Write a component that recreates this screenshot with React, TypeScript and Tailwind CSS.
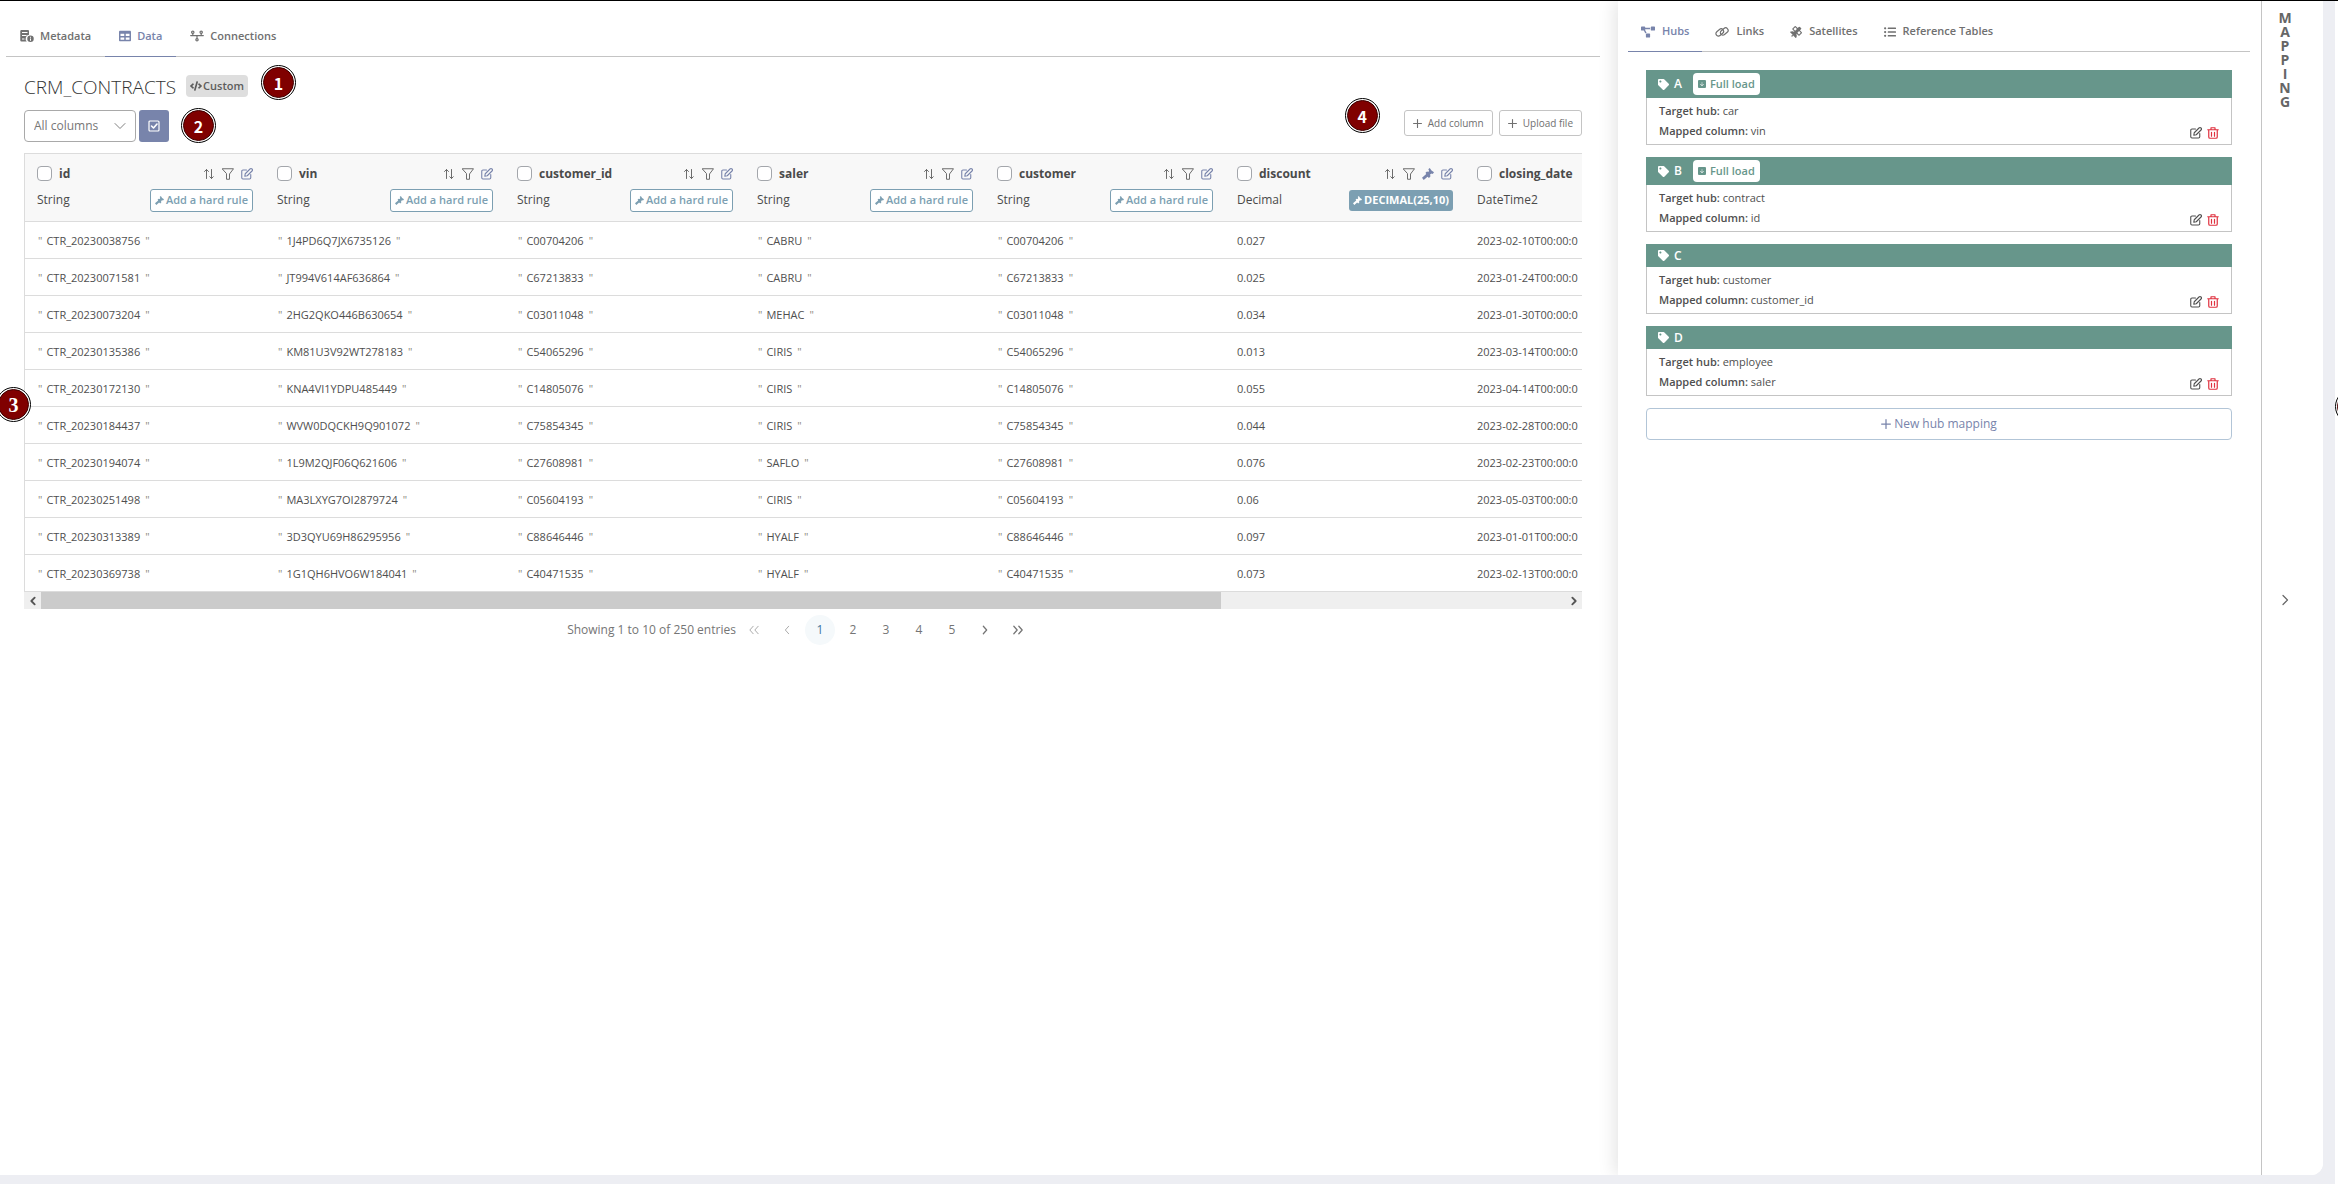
import React from "react";
import { FaTable, FaProjectDiagram, FaSatellite, FaListUl, FaTag, FaCode } from "react-icons/fa";
import { BsArrowDownSquareFill } from "react-icons/bs";

type IconProps = { className?: string };

const stroke = {
  viewBox: "0 0 24 24",
  fill: "none",
  stroke: "currentColor",
  strokeWidth: 2,
  strokeLinecap: "round" as const,
  strokeLinejoin: "round" as const,
  "aria-hidden": true,
};

const SortIcon = ({ className }: IconProps) => (
  <svg {...stroke} className={className}>
    <path d="M7 21V3M3 7l4-4 4 4M17 3v18M13.500 17.500l3.500 3.500 3.500-3.500" />
  </svg>
);

const FilterIcon = ({ className }: IconProps) => (
  <svg {...stroke} className={className}>
    <path d="M1 1.500h22L15 12v10.500H9V12z" />
  </svg>
);

const EditIcon = ({ className }: IconProps) => (
  <svg {...stroke} strokeWidth={2.2} className={className}>
    <path d="M11 4H4a2.500 2.500 0 0 0-2.500 2.500v13A2.500 2.500 0 0 0 4 22h13a2.500 2.500 0 0 0 2.500-2.500V13" />
    <path d="M18 2a2.700 2.700 0 0 1 4 4l-9.500 9.500-5 1 1-5z" />
  </svg>
);

const TrashIcon = ({ className }: IconProps) => (
  <svg {...stroke} strokeWidth={2.4} className={className}>
    <path d="M1.500 5.500h21M8 5.500V1.500h8v4M3.500 6v14A2.500 2.500 0 0 0 6 22.500h12a2.500 2.500 0 0 0 2.500-2.500V6M9 10.500v8M15 10.500v8" />
  </svg>
);

const HammerIcon = ({ className }: IconProps) => (
  <svg viewBox="0 0 24 24" fill="currentColor" aria-hidden className={className}>
    <path d="M0 19.500 8.500 12 7 9.500 10 7l3 1 1-3.500-1.500-2L15.500 0 19 5l5 3.500-2.500 3.500-2-1-3.500 2 1 3.500-3 3.500-3-2.500L3.500 24z" />
  </svg>
);

const ChevronIcon = ({ className, d = "m8 3 9 9-9 9", weight = 2.4 }: IconProps & { d?: string; weight?: number }) => (
  <svg {...stroke} className={className} strokeWidth={weight}>
    <path d={d} />
  </svg>
);

const PlusIcon = ({ className }: IconProps) => (
  <svg {...stroke} className={className} strokeWidth={3}>
    <path d="M12 1.500v21M1.500 12h21" />
  </svg>
);

const MetadataIcon = ({ className }: IconProps) => (
  <svg viewBox="0 0 28 24" fill="currentColor" aria-hidden className={className}>
    <path
      fillRule="evenodd"
      d="M3 0h13a2 2 0 0 1 2 2v7.500A8 8 0 0 0 13.500 23H3a2.500 2.500 0 0 1-2.500-2.500v-18A2.500 2.500 0 0 1 3 0zm1 4v2h11V4zm0 6v2h9v-2zm0 7v2h5v-2z"
    />
    <path fillRule="evenodd" d="M21 11a6.500 6.500 0 1 1 0 13 6.500 6.500 0 0 1 0-13zm-1 2.500v2h2v-2zm0 3.500v4.500h2V17z" />
  </svg>
);

const ConnectionsIcon = ({ className }: IconProps) => (
  <svg {...stroke} viewBox="0 0 30 24" className={className} strokeWidth={2.6}>
    <circle cx="6" cy="4" r="2.500" />
    <circle cx="24" cy="4" r="2.500" />
    <circle cx="15" cy="20" r="2.500" />
    <path d="M6 6.500V11M24 6.500V11M15 11v6.500M1.500 11h27" />
  </svg>
);

const LinkIcon = ({ className }: IconProps) => (
  <svg {...stroke} viewBox="0 0 28 24" className={className} strokeWidth={2.4}>
    <rect x="1" y="8" width="17" height="10" rx="5" transform="rotate(-40 9.500 13)" />
    <rect x="10" y="6" width="17" height="10" rx="5" transform="rotate(-40 18.500 11)" />
  </svg>
);

const CheckSquareIcon = ({ className }: IconProps) => (
  <svg {...stroke} className={className} strokeWidth={2.4}>
    <rect x="2" y="2" width="20" height="20" rx="2" />
    <path strokeWidth={3.2} d="m7 12 4 4 7-8" />
  </svg>
);

function Marker({ n, className }: { n?: number; className: string }) {
  return (
    <span
      className={`absolute z-10 flex size-[35px] items-center justify-center rounded-full border border-black bg-white p-px ${className}`}
    >
      <span
        className={`flex size-full items-center justify-center rounded-full border border-[#400000] bg-[#800000] font-bold text-white ${
          n === 3
            ? "font-['Liberation_Serif',serif] text-[20px]"
            : "font-['Noto_Sans_CJK_SC',sans-serif] text-[16px] leading-4"
        }`}
      >
        {n}
      </span>
    </span>
  );
}

type Column = { name: string; type: string; rule?: string; last?: boolean };

const columns: Column[] = [
  { name: "id", type: "String" },
  { name: "vin", type: "String" },
  { name: "customer_id", type: "String" },
  { name: "saler", type: "String" },
  { name: "customer", type: "String" },
  { name: "discount", type: "Decimal", rule: "DECIMAL(25,10)" },
  { name: "closing_date", type: "DateTime2", last: true },
];

const rows: string[][] = [
  ["CTR_20230038756", "1J4PD6Q7JX6735126", "C00704206", "CABRU", "0.027", "2023-02-10"],
  ["CTR_20230071581", "JT994V614AF636864", "C67213833", "CABRU", "0.025", "2023-01-24"],
  ["CTR_20230073204", "2HG2QKO446B630654", "C03011048", "MEHAC", "0.034", "2023-01-30"],
  ["CTR_20230135386", "KM81U3V92WT278183", "C54065296", "CIRIS", "0.013", "2023-03-14"],
  ["CTR_20230172130", "KNA4VI1YDPU485449", "C14805076", "CIRIS", "0.055", "2023-04-14"],
  ["CTR_20230184437", "WVW0DQCKH9Q901072", "C75854345", "CIRIS", "0.044", "2023-02-28"],
  ["CTR_20230194074", "1L9M2QJF06Q621606", "C27608981", "SAFLO", "0.076", "2023-02-23"],
  ["CTR_20230251498", "MA3LXYG7OI2879724", "C05604193", "CIRIS", "0.06", "2023-05-03"],
  ["CTR_20230313389", "3D3QYU69H86295956", "C88646446", "HYALF", "0.097", "2023-01-01"],
  ["CTR_20230369738", "1G1QH6HVO6W184041", "C40471535", "HYALF", "0.073", "2023-02-13"],
];

const hubs = [
  { id: "A", target: "car", column: "vin", full: true },
  { id: "B", target: "contract", column: "id", full: true },
  { id: "C", target: "customer", column: "customer_id", full: false },
  { id: "D", target: "employee", column: "saler", full: false },
];

function Quoted({ value }: { value: string }) {
  return (
    <span className="flex gap-1 pl-px">
      <span className="text-[#8d8a80]">"</span>
      <span>{value}</span>
      <span className="pl-px text-[#8d8a80]">"</span>
    </span>
  );
}

function HeaderCell({ column }: { column: Column }) {
  return (
    <th
      className={`border-y border-[#dcdcdc] pl-3 text-left align-middle font-normal ${column.last ? "" : "w-60 pr-3"}`}
    >
      <div className="flex h-5 items-center">
        <label className="flex items-center gap-[7px] text-xs font-bold text-[#4a4a4a]">
          <input
            type="checkbox"
            className="size-[15px] appearance-none rounded-[4px] border border-[#a3a6ab] bg-white"
          />
          {column.name}
        </label>
        {!column.last && (
          <div className="ml-auto flex items-center gap-[7px] text-[#6c6c6c]">
            <button aria-label="Sort">
              <SortIcon className="size-3" />
            </button>
            <button aria-label="Filter">
              <FilterIcon className="size-3" />
            </button>
            {column.rule && (
              <button aria-label="Edit rule" className="text-[#7884ab]">
                <HammerIcon className="size-3" />
              </button>
            )}
            <button aria-label="Edit" className="text-[#7884ab]">
              <EditIcon className="size-3" />
            </button>
          </div>
        )}
      </div>
      <div className="mt-[5px] flex h-[23px] items-center justify-between text-xs font-medium text-[#4a4a4a]">
        {column.type}
        {column.rule && (
          <button className="flex h-[21px] items-center gap-0.5 rounded-[3px] bg-[#7c9fb2] px-1 text-[11px] font-bold text-white">
            <HammerIcon className="size-[9px]" />
            {column.rule}
          </button>
        )}
        {!column.rule && !column.last && (
          <button className="flex h-[23px] items-center gap-0.5 rounded-[3px] border border-[#7c9fb2] bg-white px-1 text-[11px] font-semibold text-[#7c9fb2]">
            <HammerIcon className="size-[9px]" />
            Add a hard rule
          </button>
        )}
      </div>
    </th>
  );
}

function DataPanel() {
  const tab = "-mb-px flex h-[43px] items-center gap-1.5 border-b px-3.5 pt-0.5 text-[11px] font-semibold";
  return (
    <section className="min-w-0 flex-[1618]">
      <div className="pt-[13px] pr-[18px] pl-1.5">
        <nav className="flex border-b border-[#c4c4c4]">
          <button className={`${tab} border-transparent`}>
            <MetadataIcon className="h-3 w-3.5" />
            Metadata
          </button>
          <button className={`${tab} border-[#7884ab] text-[#7884ab]`}>
            <FaTable className="size-3" />
            Data
          </button>
          <button className={`${tab} border-transparent`}>
            <ConnectionsIcon className="h-3 w-3.5" />
            Connections
          </button>
        </nav>

        <div className="px-[18px] pt-[17px]">
          <div className="flex h-[27px] items-center gap-2.5">
            <h1 className="text-[19px] font-light text-[#333]">CRM_CONTRACTS</h1>
            <div className="relative mb-[3px] flex h-[22px] items-center gap-px rounded-[4px] bg-[#dedede] px-1 text-[11px] font-semibold text-[#5c5c5c]">
              <FaCode className="size-3" />
              Custom
              <Marker n={1} className="-top-2.5 left-full ml-[13px]" />
            </div>
          </div>

          <div className="mt-[9px] flex h-8 items-center">
            <div className="relative h-8 w-28">
              <select
                aria-label="Columns"
                className="h-full w-full appearance-none rounded-[4px] border border-[#a9a9a9] bg-white pl-[9px] text-xs text-[#777]"
              >
                <option>All columns</option>
              </select>
              <ChevronIcon
                d="m2 7 10 10L22 7"
                weight={2}
                className="pointer-events-none absolute top-2.5 right-2.5 size-3 text-[#808080]"
              />
            </div>
            <div className="relative ml-[3px]">
              <button
                aria-label="Select columns"
                className="flex h-8 w-[30px] items-center justify-center rounded-[3px] bg-[#7884ab] text-white"
              >
                <CheckSquareIcon className="size-3" />
              </button>
              <Marker n={2} className="-top-0.5 left-full ml-3" />
            </div>
            <div className="relative -mt-1.5 ml-auto flex gap-1.5">
              <Marker n={4} className="-top-3 right-full mr-6" />
              <button className="flex h-[26px] items-center gap-1.5 rounded-[3px] border border-[#c4c4c4] px-2 text-[10px]">
                <PlusIcon className="size-[9px]" />
                Add column
              </button>
              <button className="flex h-[26px] items-center gap-1.5 rounded-[3px] border border-[#c4c4c4] px-2 text-[10px]">
                <PlusIcon className="size-[9px]" />
                Upload file
              </button>
            </div>
          </div>

          <div className="relative mt-[11px]">
            <Marker n={3} className="top-[234px] -left-[28px]" />
            <div className="overflow-hidden border-l border-[#dcdcdc]">
              <table className="w-full table-fixed border-separate border-spacing-0">
                <thead>
                  <tr className="h-[69px] bg-[#f8f8f8]">
                    {columns.map((c) => (
                      <HeaderCell key={c.name} column={c} />
                    ))}
                  </tr>
                </thead>
                <tbody className="text-[#4f4f4f]">
                  {rows.map(([id, vin, customer, saler, discount, date]) => (
                    <tr
                      key={id}
                      className="h-[37px] text-[11px] [&>td]:border-b [&>td]:border-[#dcdcdc] [&>td]:pt-0.5 [&>td]:pl-3"
                    >
                      <td><Quoted value={id} /></td>
                      <td><Quoted value={vin} /></td>
                      <td><Quoted value={customer} /></td>
                      <td><Quoted value={saler} /></td>
                      <td><Quoted value={customer} /></td>
                      <td>{discount}</td>
                      <td className="whitespace-nowrap">{date}T00:00:0</td>
                    </tr>
                  ))}
                </tbody>
              </table>
            </div>
            <div className="flex h-[17px] bg-[#efefef] text-[#555]">
              <button aria-label="Scroll left" className="flex w-[17px] items-center justify-center">
                <ChevronIcon d="m16 4-8 8 8 8" weight={4.5} className="size-2.5" />
              </button>
              <div className="flex-1">
                <div className="h-full w-[77.4%] bg-[#cbcbcb]" />
              </div>
              <button aria-label="Scroll right" className="flex w-[17px] items-center justify-center">
                <ChevronIcon d="m8 4 8 8-8 8" weight={4.5} className="size-2.5" />
              </button>
            </div>
          </div>

          <div className="mt-1.5 flex items-center justify-center gap-[3px] pr-1.5 text-[#757575] [&>button]:flex [&>button]:size-[30px] [&>button]:items-center [&>button]:justify-center">
            <span className="text-xs">Showing 1 to 10 of 250 entries</span>
            <button aria-label="First page" className="opacity-60">
              <ChevronIcon d="m10 3-8 9 8 9M22 3l-8 9 8 9" className="size-2.5" />
            </button>
            <button aria-label="Previous page" className="opacity-60">
              <ChevronIcon d="m16 3-8 9 8 9" className="size-2.5" />
            </button>
            <button className="rounded-full bg-[#f5f9fb] text-xs text-[#3f77a0]">1</button>
            <button className="text-xs">2</button>
            <button className="text-xs">3</button>
            <button className="text-xs">4</button>
            <button className="text-xs">5</button>
            <button aria-label="Next page">
              <ChevronIcon d="m8 3 8 9-8 9" weight={3} className="size-2.5" />
            </button>
            <button aria-label="Last page">
              <ChevronIcon d="m2 3 8 9-8 9M14 3l8 9-8 9" weight={3} className="size-2.5" />
            </button>
          </div>
        </div>
      </div>
    </section>
  );
}

function MappingPanel() {
  const tab = "-mb-px flex h-[42px] items-center gap-[7px] border-b px-[13px] pt-0.5 text-[11px] font-semibold";
  return (
    <section className="min-w-0 flex-[643] bg-white shadow-[-4px_0_16px_rgba(0,0,0,0.1)]">
      <div className="pt-[9px] pr-[11px] pl-2.5">
        <nav className="flex border-b border-[#c4c4c4]">
          <button className={`${tab} border-[#7884ab] text-[#7884ab]`}>
            <FaProjectDiagram className="size-3.5" />
            Hubs
          </button>
          <button className={`${tab} border-transparent`}>
            <LinkIcon className="h-3 w-3.5" />
            Links
          </button>
          <button className={`${tab} border-transparent`}>
            <FaSatellite className="size-3" />
            Satellites
          </button>
          <button className={`${tab} border-transparent`}>
            <FaListUl className="size-3" />
            Reference Tables
          </button>
        </nav>
        <div className="flex flex-col gap-3 px-[18px] pt-[18px]">
          {hubs.map((h) => (
            <article key={h.id}>
              <header
                className={`flex items-center gap-[5px] bg-[#67968b] pl-3 text-xs font-semibold text-white ${h.full ? "h-7" : "h-[23px]"}`}
              >
                <FaTag className="size-[11px]" />
                {h.id}
                {h.full && (
                  <span className="ml-1.5 flex h-[22px] items-center gap-1 rounded-[4px] bg-white px-[5px] text-[11px] text-[#67968b]">
                    <BsArrowDownSquareFill className="size-2" />
                    Full load
                  </span>
                )}
              </header>
              <div className="flex h-[47px] items-end border border-t-0 border-[#c4c4c4] pr-3 pb-[3px] pl-3 text-[11px] leading-5 text-[#4f4f4f]">
                <div>
                  <p><b className="font-semibold">Target hub:</b> {h.target}</p>
                  <p><b className="font-semibold">Mapped column:</b> {h.column}</p>
                </div>
                <div className="mb-0.5 ml-auto flex gap-[5px]">
                  <button aria-label={`Edit ${h.id}`}>
                    <EditIcon className="size-3" />
                  </button>
                  <button aria-label={`Delete ${h.id}`} className="text-[#e0313f]">
                    <TrashIcon className="size-3" />
                  </button>
                </div>
              </div>
            </article>
          ))}
          <button className="flex h-8 items-center justify-center gap-[3px] rounded-[4px] border border-[#b2c5d7] text-xs text-[#7884ab]">
            <PlusIcon className="size-2.5" />
            New hub mapping
          </button>
        </div>
      </div>
    </section>
  );
}

export default function App() {
  return (
    <div className="relative flex min-h-screen overflow-hidden border-t border-black bg-[#edeef3] pb-[9px] font-['Open_Sans',sans-serif] text-[#707070]">
      <main className="flex min-w-0 flex-1 overflow-hidden rounded-br-[12px] bg-white">
        <DataPanel />
        <MappingPanel />
        <aside className="relative flex w-[62px] flex-col items-center border-l border-[#c4c4c4] bg-white pt-2.5 pr-[15px]">
          <h2 className="w-[13px] text-center text-[14px] leading-[14px] font-bold break-all text-[#666]">MAPPING</h2>
          <button aria-label="Collapse mapping" className="absolute top-1/2 mt-1.5 text-[#666]">
            <ChevronIcon className="size-3" />
          </button>
        </aside>
      </main>
      <div className="relative -mb-[9px] ml-3 w-[3px] bg-white">
        <Marker className="top-[388px] left-0" />
      </div>
    </div>
  );
}
